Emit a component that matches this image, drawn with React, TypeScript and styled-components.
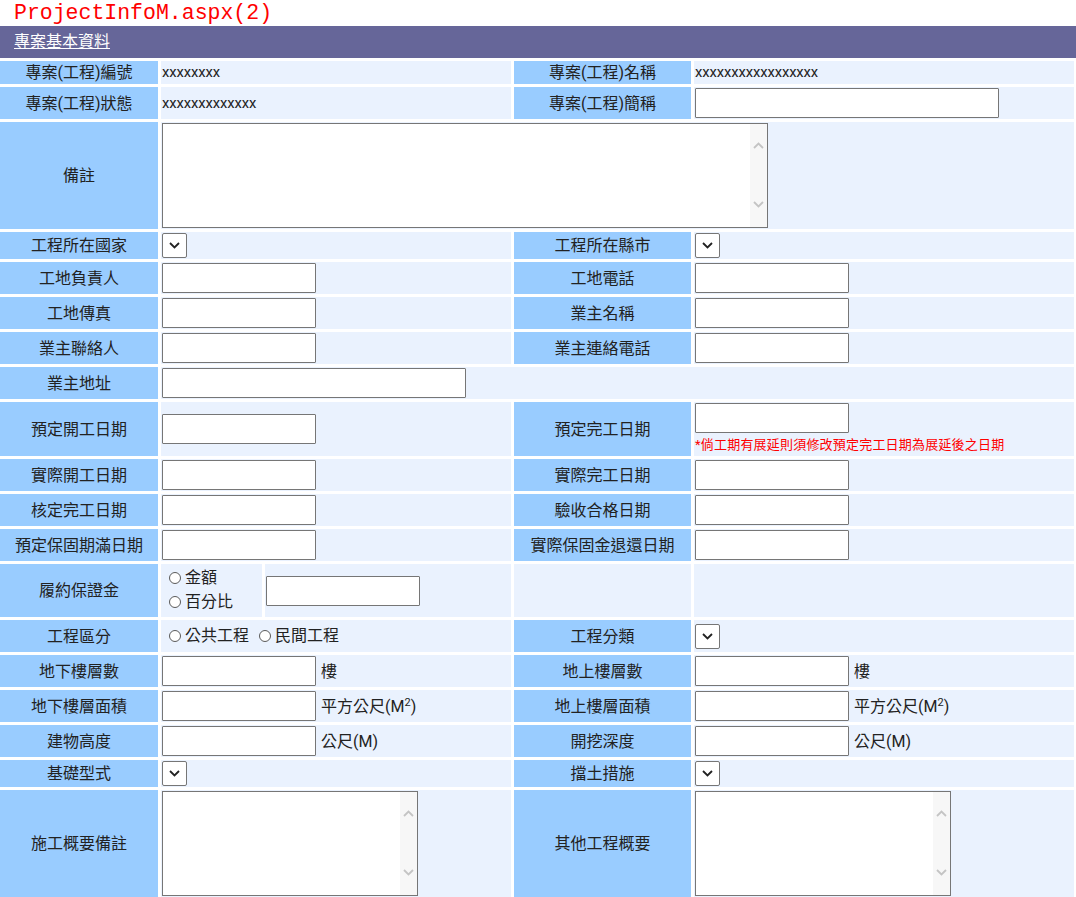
import React from 'react';
import styled, { createGlobalStyle } from 'styled-components';

const GlobalStyle = createGlobalStyle`
  html, body { margin: 0; padding: 0; background: #fff; }
  body {
    font-family: Roboto, "Noto Sans CJK TC", sans-serif;
    font-size: 16px;
    color: #222;
  }
`;

const Page = styled.div`
  width: 1076px;
`;

const Title = styled.div`
  height: 26px;
  padding-left: 14px;
  font-family: "Liberation Mono", monospace;
  font-size: 21.5px;
  line-height: 26px;
  color: #ff0000;
`;

const Header = styled.div`
  height: 32px;
  background: #666699;
  padding-left: 14px;
  display: flex;
  align-items: center;
`;

const HeaderLink = styled.span`
  color: #fff;
  text-decoration: underline;
  font-size: 16px;
  line-height: 20px;
`;

const Grid = styled.div`
  display: grid;
  grid-template-columns: 158px 350px 177px 380px;
  gap: 3px;
  margin-top: 3px;
`;

const Label = styled.div`
  background: #99ccff;
  display: flex;
  align-items: center;
  justify-content: center;
  text-align: center;
  line-height: 21px;
  padding: 1px 0;
`;

const Value = styled.div<{ $span?: number; $stack?: boolean }>`
  background: #eaf2fe;
  display: flex;
  flex-direction: ${(p) => (p.$stack ? 'column' : 'row')};
  align-items: ${(p) => (p.$stack ? 'flex-start' : 'center')};
  justify-content: ${(p) => (p.$stack ? 'center' : 'flex-start')};
  gap: ${(p) => (p.$stack ? '2px' : '5px')};
  padding: 1px;
  line-height: 21px;
  grid-column: span ${(p) => p.$span ?? 1};
`;

const ValueText = styled.span`
  font-size: 14.8px;
  letter-spacing: -0.1px;
`;

const SplitValue = styled.div`
  background: #fff;
  display: grid;
  grid-template-columns: 101px 1fr;
  gap: 3px;
`;

const SubCell = styled.div<{ $radios?: boolean }>`
  background: #eaf2fe;
  display: flex;
  flex-direction: ${(p) => (p.$radios ? 'column' : 'row')};
  justify-content: ${(p) => (p.$radios ? 'center' : 'flex-start')};
  align-items: ${(p) => (p.$radios ? 'flex-start' : 'center')};
  padding: ${(p) => (p.$radios ? '2px 0 3px 8px' : '1px')};
`;

const TextInput = styled.input<{ $w?: number }>`
  box-sizing: border-box;
  width: ${(p) => p.$w ?? 154}px;
  height: 30px;
  border: 1px solid #767676;
  border-radius: 1px;
  background: #fff;
  padding: 2px 4px;
  margin: 0;
  font: inherit;
`;

const SelectBox = styled.div`
  box-sizing: border-box;
  width: 25px;
  height: 25px;
  border: 1px solid #767676;
  border-radius: 2px;
  background: #fff;
  display: flex;
  align-items: center;
  justify-content: center;
`;

const AreaBox = styled.div<{ $w: number; $h: number }>`
  box-sizing: border-box;
  width: ${(p) => p.$w}px;
  height: ${(p) => p.$h}px;
  border: 1px solid #767676;
  background: #fff;
  display: flex;
`;

const Area = styled.textarea`
  flex: 1;
  border: none;
  outline: none;
  resize: none;
  overflow: hidden;
  background: transparent;
  margin: 0;
  padding: 2px;
  font: inherit;
`;

const ScrollTrack = styled.div`
  width: 17px;
  background: #f7f7f7;
  display: flex;
  flex-direction: column;
  justify-content: space-between;
  align-items: center;
  padding: 18px 0 19px;
`;

const Unit = styled.span`
  white-space: nowrap;
`;

const Sup = styled.sup`
  font-size: 11px;
  line-height: 0;
  vertical-align: 6px;
`;

const Note = styled.span`
  color: #ff0000;
  font-size: 13px;
  line-height: 20px;
  letter-spacing: 0.2px;
`;

const RadioRow = styled.div`
  display: flex;
  align-items: center;
  gap: 10px;
  padding-left: 7px;
  min-height: 30px;
`;

const RadioItem = styled.label`
  display: inline-flex;
  align-items: center;
  line-height: 24px;
`;

const RadioDot = styled.span`
  box-sizing: border-box;
  width: 12px;
  height: 12px;
  border: 1px solid #5a5a5a;
  border-radius: 50%;
  background: #fff;
  margin-right: 4px;
`;

const SelectChevron = () => (
  <svg width="11" height="7" viewBox="0 0 11 7">
    <path d="M1 1 L5.5 5.5 L10 1" fill="none" stroke="#222" strokeWidth="1.8" />
  </svg>
);

const ScrollChevron = ({ up }: { up?: boolean }) => (
  <svg width="11" height="7" viewBox="0 0 11 7">
    <path
      d={up ? 'M1 6 L5.5 1.5 L10 6' : 'M1 1 L5.5 5.5 L10 1'}
      fill="none"
      stroke="#c4c4c4"
      strokeWidth="1.8"
    />
  </svg>
);

const Select = () => (
  <SelectBox>
    <SelectChevron />
  </SelectBox>
);

const TextArea = ({ w, h }: { w: number; h: number }) => (
  <AreaBox $w={w} $h={h}>
    <Area />
    <ScrollTrack>
      <ScrollChevron up />
      <ScrollChevron />
    </ScrollTrack>
  </AreaBox>
);

const Radio = ({ text }: { text: string }) => (
  <RadioItem>
    <RadioDot />
    {text}
  </RadioItem>
);

type Pair = [string, string];

const inputPairs: Pair[] = [
  ['工地負責人', '工地電話'],
  ['工地傳真', '業主名稱'],
  ['業主聯絡人', '業主連絡電話'],
];

const datePairs: Pair[] = [
  ['實際開工日期', '實際完工日期'],
  ['核定完工日期', '驗收合格日期'],
  ['預定保固期滿日期', '實際保固金退還日期'],
];

const SqM = () => (
  <Unit>
    平方公尺(M<Sup>2</Sup>)
  </Unit>
);

export default function App() {
  return (
    <>
      <GlobalStyle />
      <Page>
        <Title>ProjectInfoM.aspx(2)</Title>
        <Header>
          <HeaderLink>專案基本資料</HeaderLink>
        </Header>
        <Grid>
          <Label>專案(工程)編號</Label>
          <Value>
            <ValueText>xxxxxxxx</ValueText>
          </Value>
          <Label>專案(工程)名稱</Label>
          <Value>
            <ValueText>xxxxxxxxxxxxxxxxx</ValueText>
          </Value>

          <Label>專案(工程)狀態</Label>
          <Value>
            <ValueText>xxxxxxxxxxxxx</ValueText>
          </Value>
          <Label>專案(工程)簡稱</Label>
          <Value>
            <TextInput $w={304} />
          </Value>

          <Label>備註</Label>
          <Value $span={3}>
            <TextArea w={606} h={105} />
          </Value>

          <Label>工程所在國家</Label>
          <Value>
            <Select />
          </Value>
          <Label>工程所在縣市</Label>
          <Value>
            <Select />
          </Value>

          {inputPairs.map(([a, b]) => (
            <React.Fragment key={a}>
              <Label>{a}</Label>
              <Value>
                <TextInput />
              </Value>
              <Label>{b}</Label>
              <Value>
                <TextInput />
              </Value>
            </React.Fragment>
          ))}

          <Label>業主地址</Label>
          <Value $span={3}>
            <TextInput $w={304} />
          </Value>

          <Label>預定開工日期</Label>
          <Value>
            <TextInput />
          </Value>
          <Label>預定完工日期</Label>
          <Value $stack>
            <TextInput />
            <Note>*倘工期有展延則須修改預定完工日期為展延後之日期</Note>
          </Value>

          {datePairs.map(([a, b]) => (
            <React.Fragment key={a}>
              <Label>{a}</Label>
              <Value>
                <TextInput />
              </Value>
              <Label>{b}</Label>
              <Value>
                <TextInput />
              </Value>
            </React.Fragment>
          ))}

          <Label>履約保證金</Label>
          <SplitValue>
            <SubCell $radios>
              <Radio text="金額" />
              <Radio text="百分比" />
            </SubCell>
            <SubCell>
              <TextInput />
            </SubCell>
          </SplitValue>
          <Value />
          <Value />

          <Label>工程區分</Label>
          <Value>
            <RadioRow>
              <Radio text="公共工程" />
              <Radio text="民間工程" />
            </RadioRow>
          </Value>
          <Label>工程分類</Label>
          <Value>
            <Select />
          </Value>

          <Label>地下樓層數</Label>
          <Value>
            <TextInput />
            <Unit>樓</Unit>
          </Value>
          <Label>地上樓層數</Label>
          <Value>
            <TextInput />
            <Unit>樓</Unit>
          </Value>

          <Label>地下樓層面積</Label>
          <Value>
            <TextInput />
            <SqM />
          </Value>
          <Label>地上樓層面積</Label>
          <Value>
            <TextInput />
            <SqM />
          </Value>

          <Label>建物高度</Label>
          <Value>
            <TextInput />
            <Unit>公尺(M)</Unit>
          </Value>
          <Label>開挖深度</Label>
          <Value>
            <TextInput />
            <Unit>公尺(M)</Unit>
          </Value>

          <Label>基礎型式</Label>
          <Value>
            <Select />
          </Value>
          <Label>擋土措施</Label>
          <Value>
            <Select />
          </Value>

          <Label>施工概要備註</Label>
          <Value>
            <TextArea w={256} h={105} />
          </Value>
          <Label>其他工程概要</Label>
          <Value>
            <TextArea w={256} h={105} />
          </Value>
        </Grid>
      </Page>
    </>
  );
}
